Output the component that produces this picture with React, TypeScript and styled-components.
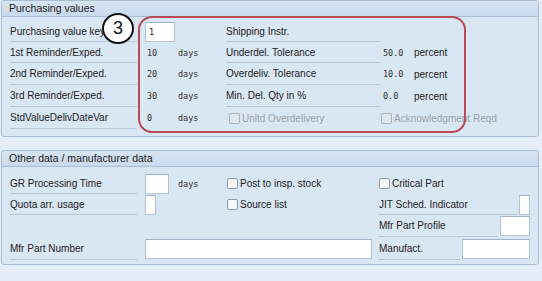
import React from 'react';
import styled, { createGlobalStyle } from 'styled-components';

const GlobalStyle = createGlobalStyle`
  body {
    margin: 0;
    background: #e4eef8;
    font-family: "Liberation Sans", Arial, sans-serif;
    font-size: 10px;
    color: #222;
  }
`;

const Page = styled.div`
  padding: 0 3px 20px 1px;
`;

const Panel = styled.section<{ $gap?: number }>`
  position: relative;
  margin-top: ${p => p.$gap || 0}px;
  background: #d9e6f3;
  border: 1px solid #a9bdd3;
  border-radius: 3px;
`;

const PanelHeader = styled.div`
  height: 15px;
  line-height: 15px;
  padding-left: 7px;
  font-size: 10.5px;
  background: linear-gradient(#d7e5f3, #c8daed);
  border-bottom: 1px solid #a8bdd4;
  border-radius: 3px 3px 0 0;
`;

const Grid = styled.div<{ $cols: string; $rows: string; $pad: string }>`
  display: grid;
  grid-template-columns: ${p => p.$cols};
  grid-template-rows: ${p => p.$rows};
  padding: ${p => p.$pad};
`;

const Label = styled.div<{ $line?: boolean }>`
  display: flex;
  align-items: center;
  min-width: 0;
  white-space: nowrap;
  border-bottom: 1px solid ${p => (p.$line === false ? 'transparent' : '#b7c8da')};
`;

const Cell = styled.div<{ $pad?: number; $span?: string }>`
  display: flex;
  align-items: center;
  padding-left: ${p => p.$pad || 0}px;
  white-space: nowrap;
  grid-column: ${p => p.$span || 'auto'};
`;

const Mono = styled.span`
  font-family: "DejaVu Sans Mono", "Liberation Mono", monospace;
  font-size: 8.5px;
  color: #333;
`;

const Input = styled.div<{ $w: number }>`
  width: ${p => p.$w}px;
  height: 20px;
  box-sizing: border-box;
  background: #fff;
  border: 1px solid #b4c4d6;
  border-top-color: #9fb2c7;
  display: flex;
  align-items: center;
  padding-left: 3px;
  font-family: "DejaVu Sans Mono", "Liberation Mono", monospace;
  font-size: 8.5px;
  flex-shrink: 0;
`;

const Check = styled.label<{ $disabled?: boolean }>`
  display: flex;
  align-items: center;
  gap: 2px;
  color: ${p => (p.$disabled ? '#9aa3ad' : '#222')};
  white-space: nowrap;
  &::before {
    content: '';
    width: 9px;
    height: 9px;
    border: 1px solid ${p => (p.$disabled ? '#aab4bf' : '#8c9aab')};
    border-radius: 2px;
    background: ${p => (p.$disabled ? '#dfe8f1' : '#f7f9fb')};
  }
`;

const Field = styled.div`
  display: flex;
  align-items: stretch;
  & > ${Label} {
    flex: 1;
    margin-right: 2px;
  }
  & > ${Input} {
    align-self: center;
  }
`;

const Highlight = styled.div`
  position: absolute;
  left: 136px;
  top: 15px;
  width: 328px;
  height: 117px;
  box-sizing: border-box;
  border: 2px solid #b84a53;
  border-radius: 14px;
  pointer-events: none;
`;

const Callout = styled.div`
  position: absolute;
  left: 100px;
  top: 12px;
  width: 32px;
  height: 31px;
  box-sizing: border-box;
  border: 2px solid #111;
  border-radius: 50%;
  background: #fff;
  display: flex;
  align-items: center;
  justify-content: center;
  font-size: 18px;
  color: #111;
`;

const purchRows = [
  { label: '1st Reminder/Exped.', days: '10', label2: 'Underdel. Tolerance', pct: '50.0' },
  { label: '2nd Reminder/Exped.', days: '20', label2: 'Overdeliv. Tolerance', pct: '10.0' },
  { label: '3rd Reminder/Exped.', days: '30', label2: 'Min. Del. Qty in %', pct: '0.0' },
];

const App = () => {
  return (
    <Page>
      <GlobalStyle />
      <Panel>
        <PanelHeader>Purchasing values</PanelHeader>
        <Grid
          $cols="127px 41px 48px 154px 34px 1fr"
          $rows="21px 21px 22px 22px 22px"
          $pad="4px 0 7px 8px"
        >
          <Label>Purchasing value key</Label>
          <Cell $pad={8}><Input $w={30}>1</Input></Cell>
          <Cell />
          <Label>Shipping Instr.</Label>
          <Cell />
          <Cell />
          {purchRows.map(r => (
            <React.Fragment key={r.label}>
              <Label>{r.label}</Label>
              <Cell $pad={10}><Mono>{r.days}</Mono></Cell>
              <Cell><Mono>days</Mono></Cell>
              <Label>{r.label2}</Label>
              <Cell $pad={3}><Mono>{r.pct}</Mono></Cell>
              <Cell>percent</Cell>
            </React.Fragment>
          ))}
          <Label>StdValueDelivDateVar</Label>
          <Cell $pad={10}><Mono>0</Mono></Cell>
          <Cell><Mono>days</Mono></Cell>
          <Cell $pad={3}><Check $disabled>Unltd Overdelivery</Check></Cell>
          <Cell $pad={1} $span="span 2"><Check $disabled>Acknowledgment Reqd</Check></Cell>
        </Grid>
        <Highlight />
        <Callout>3</Callout>
      </Panel>

      <Panel $gap={13}>
        <PanelHeader>Other data / manufacturer data</PanelHeader>
        <Grid
          $cols="127px 41px 49px 152px 1fr"
          $rows="21px 21px 22px 23px"
          $pad="6px 8px 4px 8px"
        >
          <Label>GR Processing Time</Label>
          <Cell $pad={8}><Input $w={24} /></Cell>
          <Cell><Mono>days</Mono></Cell>
          <Cell><Check>Post to insp. stock</Check></Cell>
          <Cell><Check>Critical Part</Check></Cell>

          <Label>Quota arr. usage</Label>
          <Cell $pad={8}><Input $w={11} /></Cell>
          <Cell />
          <Cell><Check>Source list</Check></Cell>
          <Field>
            <Label>JIT Sched. Indicator</Label>
            <Input $w={11} />
          </Field>

          <Cell $span="1 / 5" />
          <Field>
            <Label>Mfr Part Profile</Label>
            <Input $w={30} />
          </Field>

          <Label>Mfr Part Number</Label>
          <Cell $pad={8} $span="2 / 5"><Input $w={227} /></Cell>
          <Field>
            <Label>Manufact.</Label>
            <Input $w={68} />
          </Field>
        </Grid>
      </Panel>
    </Page>
  );
};

export default App;
